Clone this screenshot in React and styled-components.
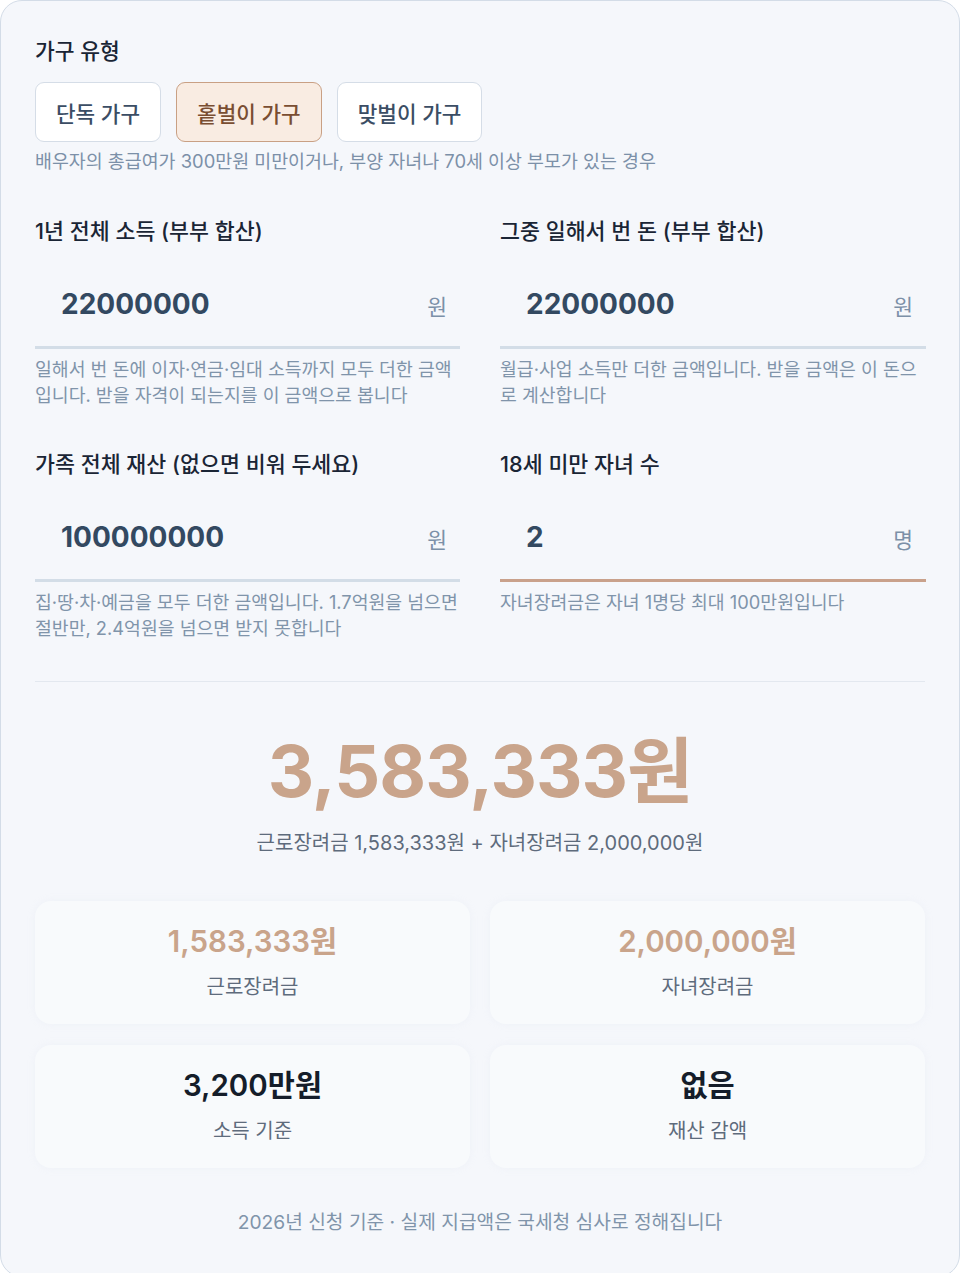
import React from "react";
import styled, { createGlobalStyle } from "styled-components";

const Global = createGlobalStyle`
  html, body { margin: 0; padding: 0; background: #ffffff; }
  body { font-family: Inter, "Noto Sans CJK KR", sans-serif; }
  * { box-sizing: border-box; }
`;

const Card = styled.div`
  width: 960px;
  min-height: 1273px;
  background: #f5f7fb;
  border: 1px solid #d3dce7;
  border-radius: 22px;
  padding: 35px 34px 40px;
  display: flex;
  flex-direction: column;
`;

const SectionLabel = styled.div`
  font-size: 21.5px;
  font-weight: 500;
  color: #1a2535;
  line-height: 30px;
`;

const TypeRow = styled.div`
  display: flex;
  gap: 15px;
  margin-top: 16px;
`;

const TypeButton = styled.button`
  height: 60px;
  padding: 0 20px;
  font-family: inherit;
  font-size: 21.3px;
  font-weight: 500;
  border-radius: 9px;
  border: 1px solid ${(p) => (p.$active ? "#c9a084" : "#d5dde7")};
  background: ${(p) => (p.$active ? "#f9ece2" : "#ffffff")};
  color: ${(p) => (p.$active ? "#7a4e32" : "#3b4d64")};
`;

const Hint = styled.div`
  font-size: 18.4px;
  color: #7c90a8;
  line-height: 27px;
  margin-top: 6px;
`;

const FieldGrid = styled.div`
  display: grid;
  grid-template-columns: 425px 426px;
  column-gap: 40px;
  row-gap: 40px;
  margin-top: 40px;
`;

const Field = styled.div`
  display: flex;
  flex-direction: column;
`;

const FieldLabel = styled.div`
  font-size: 21.7px;
  font-weight: 500;
  color: #1a2535;
  line-height: 32px;
`;

const InputRow = styled.div`
  display: flex;
  align-items: center;
  justify-content: space-between;
  height: 102px;
  padding: 14px 13px 0 26px;
  border-bottom: 3px solid ${(p) => (p.$active ? "#c9a18b" : "#d3dde7")};
`;

const Value = styled.span`
  font-size: 28px;
  font-weight: 700;
  color: #334961;
`;

const Unit = styled.span`
  font-size: 21.5px;
  color: #7c90a8;
  margin-top: 4px;
`;

const Help = styled.div`
  font-size: 18.3px;
  color: #8094aa;
  line-height: 26px;
  margin-top: 7px;
`;

const Divider = styled.hr`
  border: 0;
  border-top: 1px solid #e3e8ef;
  margin: 40px 0 0;
  width: 100%;
`;

const Total = styled.div`
  text-align: center;
  font-size: 72px;
  font-weight: 700;
  color: #c9a48b;
  letter-spacing: -1px;
  line-height: 90px;
  margin-top: 44px;
`;

const Breakdown = styled.div`
  text-align: center;
  font-size: 20px;
  color: #5e6b7c;
  margin-top: 13px;
  line-height: 28px;
`;

const StatGrid = styled.div`
  display: grid;
  grid-template-columns: 1fr 1fr;
  column-gap: 20px;
  row-gap: 21px;
  margin-top: 44px;
`;

const Stat = styled.div`
  height: 123px;
  background: #f8fafc;
  border-radius: 16px;
  box-shadow: 0 0 8px rgba(200, 208, 222, 0.12);
  display: flex;
  flex-direction: column;
  align-items: center;
  padding-top: 22px;
`;

const StatValue = styled.div`
  font-size: 29.5px;
  font-weight: 600;
  line-height: 36px;
  color: ${(p) => (p.$accent ? "#c9a48b" : "#151d2a")};
`;

const StatLabel = styled.div`
  font-size: 20px;
  color: #5e6b7c;
  line-height: 26px;
  margin-top: 15px;
`;

const Footer = styled.div`
  text-align: center;
  font-size: 19.2px;
  color: #8094aa;
  margin-top: 40px;
  line-height: 28px;
`;

const fields = [
  { label: "1년 전체 소득 (부부 합산)", value: "22000000", unit: "원", help: "일해서 번 돈에 이자·연금·임대 소득까지 모두 더한 금액입니다. 받을 자격이 되는지를 이 금액으로 봅니다" },
  { label: "그중 일해서 번 돈 (부부 합산)", value: "22000000", unit: "원", help: "월급·사업 소득만 더한 금액입니다. 받을 금액은 이 돈으로 계산합니다" },
  { label: "가족 전체 재산 (없으면 비워 두세요)", value: "100000000", unit: "원", help: "집·땅·차·예금을 모두 더한 금액입니다. 1.7억원을 넘으면 절반만, 2.4억원을 넘으면 받지 못합니다" },
  { label: "18세 미만 자녀 수", value: "2", unit: "명", help: "자녀장려금은 자녀 1명당 최대 100만원입니다", active: true },
];

const stats = [
  { value: "1,583,333원", label: "근로장려금", accent: true },
  { value: "2,000,000원", label: "자녀장려금", accent: true },
  { value: "3,200만원", label: "소득 기준" },
  { value: "없음", label: "재산 감액" },
];

export default function App() {
  return (
    <>
      <Global />
      <Card>
        <SectionLabel>가구 유형</SectionLabel>
        <TypeRow>
          <TypeButton>단독 가구</TypeButton>
          <TypeButton $active>홑벌이 가구</TypeButton>
          <TypeButton>맞벌이 가구</TypeButton>
        </TypeRow>
        <Hint>배우자의 총급여가 300만원 미만이거나, 부양 자녀나 70세 이상 부모가 있는 경우</Hint>
        <FieldGrid>
          {fields.map((f) => (
            <Field key={f.label}>
              <FieldLabel>{f.label}</FieldLabel>
              <InputRow $active={f.active}>
                <Value>{f.value}</Value>
                <Unit>{f.unit}</Unit>
              </InputRow>
              <Help>{f.help}</Help>
            </Field>
          ))}
        </FieldGrid>
        <Divider />
        <Total>3,583,333원</Total>
        <Breakdown>근로장려금 1,583,333원 + 자녀장려금 2,000,000원</Breakdown>
        <StatGrid>
          {stats.map((s) => (
            <Stat key={s.label}>
              <StatValue $accent={s.accent}>{s.value}</StatValue>
              <StatLabel>{s.label}</StatLabel>
            </Stat>
          ))}
        </StatGrid>
        <Footer>2026년 신청 기준 · 실제 지급액은 국세청 심사로 정해집니다</Footer>
      </Card>
    </>
  );
}
